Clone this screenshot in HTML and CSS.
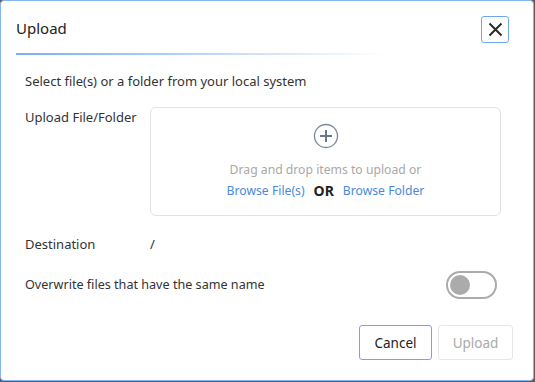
FILE: index.html
```
<!DOCTYPE html>
<html>
<head>
<meta charset="utf-8">
<link rel="stylesheet" href="styles.css">
</head>
<body>
<div class="dialog">
  <div class="header">
    <div class="title">Upload</div>
    <button class="close" aria-label="Close">
      <svg width="17" height="17" viewBox="0 0 17 17"><path d="M2.5 2.5L14.5 14.5M14.5 2.5L2.5 14.5" stroke="#2b2b2b" stroke-width="2" fill="none"/></svg>
    </button>
  </div>
  <div class="rule"></div>
  <div class="content">
    <div class="intro">Select file(s) or a folder from your local system</div>
    <div class="row upload-row">
      <div class="label">Upload File/Folder</div>
      <div class="drop">
        <svg class="plus" width="26" height="26" viewBox="0 0 26 26"><circle cx="13" cy="13" r="11.5" fill="none" stroke="#7d8897" stroke-width="1.3"/><path d="M13 7V19M7 13H19" stroke="#6b7787" stroke-width="2" fill="none"/></svg>
        <div class="drag">Drag and drop items to upload or</div>
        <div class="links"><a class="link">Browse File(s)</a><span class="or">OR</span><a class="link">Browse Folder</a></div>
      </div>
    </div>
    <div class="row dest-row">
      <div class="label">Destination</div>
      <div class="value">/</div>
    </div>
    <div class="row over-row">
      <div class="label-wide">Overwrite files that have the same name</div>
      <div class="toggle"><div class="knob"></div></div>
    </div>
  </div>
  <div class="footer">
    <button class="btn cancel">Cancel</button>
    <button class="btn upload" disabled>Upload</button>
  </div>
</div>
</body>
</html>
```
FILE: styles.css
```
* { box-sizing: border-box; }
html, body { margin: 0; padding: 0; }
body {
  background: #5b5b5b;
  width: 535px;
  height: 382px;
  font-family: "Noto Sans", "Open Sans", sans-serif;
  color: #333;
}
.dialog {
  width: 534px;
  height: 381px;
  background: #fff;
  border: 1px solid #86b3f3;
  border-radius: 4px;
  display: flex;
  flex-direction: column;
}
.header {
  display: flex;
  justify-content: space-between;
  align-items: center;
  padding: 15px 24px 0 15px;
}
.title {
  font-size: 15px;
  line-height: 25px;
  margin-bottom: 2px;
  color: #222;
}
.close {
  width: 28px;
  height: 27px;
  border: 1px solid #6fa6f2;
  border-radius: 3px;
  background: #fff;
  padding: 0;
  display: flex;
  align-items: center;
  justify-content: center;
}
.rule {
  margin: 10px 0 0 15px;
  width: 370px;
  height: 2px;
  background: linear-gradient(to right, #7aaef4 0%, #b9d5fa 50%, #ffffff 100%);
}
.content {
  padding: 16px 32px 0 24px;
  font-size: 13px;
  line-height: 20px;
  flex: 1;
}
.intro { margin-bottom: 16px; }
.row { display: flex; }
.label { width: 125px; flex: none; }
.label-wide { font-size: 12.6px; }
.drop {
  width: 351px;
  height: 109px;
  border: 1px solid #e2e2e2;
  border-radius: 6px;
  display: flex;
  flex-direction: column;
  align-items: center;
  padding-top: 15px;
}
.plus { display: block; }
.drag {
  margin-top: 11px;
  color: #a8a8a8;
  font-size: 12.2px;
}
.links {
  display: flex;
  align-items: center;
  margin-top: 1px;
}
.link { color: #4a88e0; font-size: 12.2px; }
.or { font-weight: bold; font-size: 14px; color: #222; margin: 0 9px; }
.dest-row { margin-top: 18px; }
.over-row {
  margin-top: 17px;
  align-items: center;
  justify-content: space-between;
  padding-right: 4px;
}
.toggle {
  width: 51px;
  height: 28px;
  border: 2px solid #ababab;
  border-radius: 14px;
  padding: 2px;
}
.knob {
  width: 20px;
  height: 20px;
  border-radius: 50%;
  background: #ababab;
}
.footer {
  display: flex;
  justify-content: flex-end;
  gap: 6px;
  padding: 0 20px 20px 0;
}
.btn {
  height: 35px;
  width: 74px;
  font-family: inherit;
  font-size: 13.5px;
  background: #fff;
  border-radius: 3px;
  padding: 0;
}
.cancel { border: 1px solid #6fa6f2; color: #222; width: 73px; }
.upload { border: 1px solid #e6e6e6; color: #aaa; width: 75px; }
```
